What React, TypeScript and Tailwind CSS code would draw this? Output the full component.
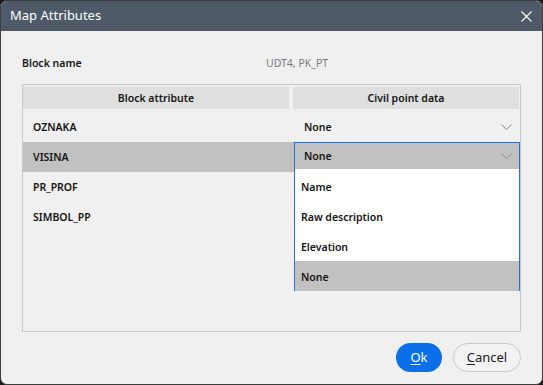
const rows = ["OZNAKA", "VISINA", "PR_PROF", "SIMBOL_PP"];
const options = ["Name", "Raw description", "Elevation", "None"];

function Chevron() {
  return (
    <svg width="11" height="6" viewBox="0 0 11 6" className="shrink-0">
      <polyline points="0.5,0.5 5.5,5.5 10.5,0.5" fill="none" stroke="#8c8c8c" strokeWidth="1" />
    </svg>
  );
}

export default function App() {
  return (
    <div className="w-[543px] h-[385px] bg-[#1c1c1c] font-['Noto_Sans',sans-serif]">
      <div className="h-full flex flex-col rounded-[7px] border border-[#3c3c3c] overflow-hidden bg-[#f0f0f0]">
        {/* title bar */}
        <div className="h-[30px] shrink-0 bg-[#4f5a68] flex items-center justify-between pl-[9px] pr-[10px]">
          <span className="text-white text-[13px]">Map Attributes</span>
          <svg width="11" height="11" viewBox="0 0 11 11">
            <path d="M0.5 0.5 L10.5 10.5 M10.5 0.5 L0.5 10.5" stroke="#ffffff" strokeWidth="1.1" />
          </svg>
        </div>

        <div className="flex-1 px-[21px] pt-[22px] text-[10.5px] text-[#151515]">
          <div className="flex items-center h-[20px] pt-[2px]">
            <span className="w-[244px] font-semibold">Block name</span>
            <span className="text-[#7a7a7a]">UDT4, PK_PT</span>
          </div>

          {/* table */}
          <div className="relative mt-[11px] h-[248px] border border-[#c9c9c9]">
            <div className="flex gap-[4px] pt-[2px] pr-[1px]">
              <div className="w-[266px] h-[22px] pt-[2px] bg-[#dfdfdf] flex items-center justify-center font-semibold">
                Block attribute
              </div>
              <div className="flex-1 h-[22px] pt-[2px] bg-[#dfdfdf] flex items-center justify-center font-semibold">
                Civil point data
              </div>
            </div>
            <div className="mt-[3px]">
              {rows.map((r, i) => (
                <div key={r} className="flex h-[30px] font-semibold">
                  <div className={`w-[271px] flex items-center pl-[10px] pt-[2px] ${i === 1 ? "bg-[#c1c1c1]" : ""}`}>{r}</div>
                  {i === 0 && (
                    <div className="flex-1 flex items-center justify-between pl-[10px] pr-[8px]">
                      <span className="pt-[2px]">None</span>
                      <Chevron />
                    </div>
                  )}
                  {i === 1 && (
                    <div className="flex-1 h-[28px] flex items-center justify-between pl-[9px] pr-[7px] bg-[#c1c1c1] border border-[#1a73e8]">
                      <span className="pt-[2px]">None</span>
                      <Chevron />
                    </div>
                  )}
                </div>
              ))}
            </div>

            {/* open dropdown list */}
            <div className="absolute left-[271px] top-[84px] w-[226px] h-[122px] pt-[2px] bg-white border border-t-0 border-[#1a73e8] font-semibold">
              {options.map((o, i) => (
                <div
                  key={o}
                  className={`h-[30px] flex items-center pl-[6px] pt-[3px] ${i === 3 ? "bg-[#c1c1c1]" : ""}`}
                >
                  {o}
                </div>
              ))}
            </div>
          </div>

          {/* buttons */}
          <div className="flex justify-end gap-[11px] mt-[11px]">
            <button className="w-[46px] h-[29px] rounded-full bg-[#0a6fe8] text-white text-[13px]">
              <span className="underline underline-offset-2">O</span>k
            </button>
            <button className="w-[68px] h-[29px] rounded-full border border-[#c8c8c8] bg-[#f2f2f2] text-[#1a1a1a] text-[13px]">
              <span className="underline underline-offset-2">C</span>ancel
            </button>
          </div>
        </div>
      </div>
    </div>
  );
}
